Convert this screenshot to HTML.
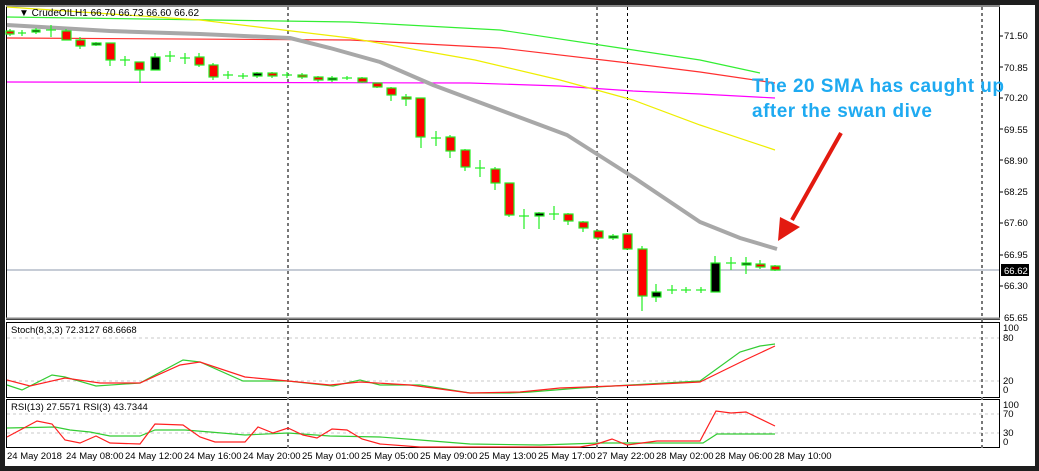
<!DOCTYPE html>
<html><head><meta charset="utf-8"><style>
html,body{margin:0;padding:0;background:#1e1e1e;width:1039px;height:471px;overflow:hidden}
svg{display:block;font-family:"Liberation Sans",sans-serif}
</style></head><body>
<svg width="1039" height="471" viewBox="0 0 1039 471" xmlns="http://www.w3.org/2000/svg">
<rect x="0" y="0" width="1039" height="471" fill="#1e1e1e"/>
<rect x="5" y="5" width="1030" height="461" fill="#fff"/>
<!-- panel borders -->
<g fill="none" stroke="#000" stroke-width="1">
<rect x="6.5" y="6.5" width="993" height="313"/>
<rect x="6.5" y="322.5" width="993" height="75"/>
<rect x="6.5" y="399.5" width="993" height="48"/>
</g>
<line x1="6" y1="318.5" x2="1000" y2="318.5" stroke="#888" stroke-width="2"/>
<line x1="6" y1="6" x2="1000" y2="6" stroke="#888" stroke-width="2"/>
<!-- indicator levels -->
<g stroke="#c8c8c8" stroke-dasharray="3,3">
<line x1="7" y1="338" x2="999" y2="338"/><line x1="7" y1="381" x2="999" y2="381"/>
<line x1="7" y1="414" x2="999" y2="414"/><line x1="7" y1="433" x2="999" y2="433"/>
</g>
<!-- vertical separators -->
<g stroke="#777" stroke-width="2" stroke-dasharray="3,3">
<line x1="288" y1="7" x2="288" y2="448"/><line x1="597" y1="7" x2="597" y2="448"/><line x1="982" y1="7" x2="982" y2="448"/>
</g>
<line x1="627.5" y1="7" x2="627.5" y2="448" stroke="#000" stroke-dasharray="3,3"/>
<!-- price line -->
<line x1="7" y1="270" x2="999" y2="270" stroke="#b4bcc8" stroke-width="1.5"/>
<!-- MAs -->
<polyline fill="none" stroke="#33ee33" stroke-width="1.2" points="7,17 350,22 500,30 620,48 700,60 760,73"/>
<polyline fill="none" stroke="#ff3030" stroke-width="1.2" points="7,38 350,40 500,48 620,62 700,72 775,83"/>
<polyline fill="none" stroke="#ff00ff" stroke-width="1.2" points="7,82 470,83 560,86 633,91 700,94 775,98"/>
<polyline fill="none" stroke="#eeee00" stroke-width="1.2" points="7,7 200,20 350,38 475,60 560,80 633,100 700,125 775,150"/>
<polyline fill="none" stroke="#a8a8a8" stroke-width="4" points="7,25 110,31 200,34 290,38 330,48 380,62 433,85 500,110 567,135 633,177 700,222 740,238 777,249"/>
<!-- candles -->
<g stroke="#22ee22" stroke-width="1.2">
<line x1="10" y1="29" x2="10" y2="36"/><rect x="6" y="31" width="8" height="3" fill="#f00"/>
<line x1="22" y1="30" x2="22" y2="36"/><line x1="18" y1="33" x2="26" y2="33"/>
<line x1="36" y1="28" x2="36" y2="34"/><rect x="32" y="30" width="8" height="2" fill="#000"/>
<line x1="51" y1="25" x2="51" y2="37"/><line x1="46" y1="30" x2="56" y2="30"/>
<line x1="66" y1="29" x2="66" y2="40"/><rect x="62" y="31" width="9" height="9" fill="#f00"/>
<line x1="80" y1="37" x2="80" y2="49"/><rect x="76" y="40" width="9" height="6" fill="#f00"/>
<line x1="96" y1="42" x2="96" y2="46"/><rect x="92" y="43" width="9" height="2" fill="#000"/>
<line x1="110" y1="43" x2="110" y2="66"/><rect x="106" y="43" width="9" height="17" fill="#f00"/>
<line x1="125" y1="56" x2="125" y2="66"/><line x1="120" y1="60" x2="130" y2="60"/>
<line x1="140" y1="62" x2="140" y2="83"/><rect x="135" y="62" width="9" height="8" fill="#f00"/>
<line x1="155" y1="53" x2="155" y2="70"/><rect x="151" y="57" width="9" height="13" fill="#000"/>
<line x1="170" y1="51" x2="170" y2="62"/><line x1="165" y1="56" x2="175" y2="56"/>
<line x1="185" y1="53" x2="185" y2="64"/><line x1="180" y1="58" x2="190" y2="58"/>
<line x1="199" y1="53" x2="199" y2="67"/><rect x="195" y="57" width="9" height="8" fill="#f00"/>
<line x1="213" y1="63" x2="213" y2="80"/><rect x="209" y="65" width="9" height="12" fill="#f00"/>
<line x1="228" y1="71" x2="228" y2="79"/><line x1="223" y1="75" x2="233" y2="75"/>
<line x1="243" y1="73" x2="243" y2="79"/><line x1="238" y1="76" x2="248" y2="76"/>
<line x1="257" y1="72" x2="257" y2="78"/><rect x="253" y="73" width="9" height="3" fill="#000"/>
<line x1="272" y1="72" x2="272" y2="78"/><rect x="268" y="73" width="9" height="3" fill="#f00"/>
<line x1="287" y1="72" x2="287" y2="78"/><line x1="282" y1="75" x2="292" y2="75"/>
<line x1="302" y1="73" x2="302" y2="79"/><rect x="298" y="75" width="9" height="2" fill="#f00"/>
<line x1="318" y1="76" x2="318" y2="82"/><rect x="314" y="77" width="9" height="3" fill="#f00"/>
<line x1="332" y1="76" x2="332" y2="82"/><rect x="328" y="78" width="9" height="2" fill="#000"/>
<line x1="347" y1="76" x2="347" y2="80"/><line x1="342" y1="78" x2="352" y2="78"/>
<line x1="362" y1="77" x2="362" y2="83"/><rect x="358" y="78" width="9" height="4" fill="#f00"/>
<line x1="377" y1="83" x2="377" y2="88"/><rect x="373" y="83" width="9" height="4" fill="#f00"/>
<line x1="391" y1="87" x2="391" y2="101"/><rect x="387" y="88" width="9" height="7" fill="#f00"/>
<line x1="406" y1="94" x2="406" y2="106"/><rect x="402" y="97" width="9" height="2" fill="#f00"/>
<line x1="421" y1="98" x2="421" y2="148"/><rect x="416" y="98" width="9" height="39" fill="#f00"/>
<line x1="436" y1="131" x2="436" y2="146"/><line x1="431" y1="138" x2="441" y2="138"/>
<line x1="450" y1="135" x2="450" y2="158"/><rect x="446" y="137" width="9" height="14" fill="#f00"/>
<line x1="465" y1="149" x2="465" y2="171"/><rect x="461" y="150" width="9" height="17" fill="#f00"/>
<line x1="480" y1="160" x2="480" y2="177"/><line x1="475" y1="168" x2="485" y2="168"/>
<line x1="495" y1="167" x2="495" y2="190"/><rect x="491" y="169" width="9" height="14" fill="#f00"/>
<line x1="509" y1="183" x2="509" y2="217"/><rect x="505" y="183" width="9" height="32" fill="#f00"/>
<line x1="524" y1="209" x2="524" y2="229"/><line x1="519" y1="216" x2="529" y2="216"/>
<line x1="539" y1="212" x2="539" y2="229"/><rect x="535" y="213" width="9" height="3" fill="#000"/>
<line x1="554" y1="206" x2="554" y2="220"/><line x1="549" y1="214" x2="559" y2="214"/>
<line x1="568" y1="213" x2="568" y2="225"/><rect x="564" y="214" width="9" height="7" fill="#f00"/>
<line x1="583" y1="221" x2="583" y2="232"/><rect x="579" y="222" width="9" height="6" fill="#f00"/>
<line x1="598" y1="230" x2="598" y2="240"/><rect x="594" y="231" width="9" height="7" fill="#f00"/>
<line x1="613" y1="234" x2="613" y2="240"/><rect x="609" y="236" width="9" height="2" fill="#000"/>
<line x1="627" y1="233" x2="627" y2="250"/><rect x="623" y="234" width="9" height="15" fill="#f00"/>
<line x1="642" y1="246" x2="642" y2="311"/><rect x="638" y="249" width="9" height="47" fill="#f00"/>
<line x1="656" y1="284" x2="656" y2="302"/><rect x="652" y="292" width="9" height="5" fill="#000"/>
<line x1="672" y1="285" x2="672" y2="294"/><line x1="667" y1="290" x2="677" y2="290"/>
<line x1="686" y1="287" x2="686" y2="293"/><line x1="681" y1="290" x2="691" y2="290"/>
<line x1="701" y1="287" x2="701" y2="293"/><line x1="696" y1="290" x2="706" y2="290"/>
<line x1="715" y1="256" x2="715" y2="292"/><rect x="711" y="263" width="9" height="29" fill="#000"/>
<line x1="731" y1="257" x2="731" y2="270"/><line x1="726" y1="263" x2="736" y2="263"/>
<line x1="746" y1="257" x2="746" y2="274"/><rect x="742" y="263" width="9" height="2" fill="#000"/>
<line x1="760" y1="260" x2="760" y2="269"/><rect x="756" y="264" width="9" height="3" fill="#f00"/>
<line x1="775" y1="265" x2="775" y2="271"/><rect x="771" y="266" width="9" height="4" fill="#f00"/>
</g>
<!-- annotation -->
<g fill="#1eaaf1" font-weight="bold" font-size="19">
<text x="752" y="92" textLength="252">The 20 SMA has caught up</text>
<text x="752" y="117" textLength="180">after the swan dive</text>
</g>
<line x1="841" y1="133" x2="792" y2="220" stroke="#e31a10" stroke-width="4"/>
<polygon points="778,241 780,217 800,227" fill="#e31a10"/>
<!-- stoch -->
<polyline fill="none" stroke="#33cc33" stroke-width="1.2" points="7,385 22,390 52,375 65,377 96,386 140,383 183,360 200,362 243,381 288,381 333,386 360,380 380,385 420,385 470,393 510,393 530,392 580,388 630,385 700,381 740,352 760,346 775,344"/>
<polyline fill="none" stroke="#ff2020" stroke-width="1.2" points="7,380 30,386 65,378 100,383 140,383 180,365 200,362 245,377 288,381 330,385 360,382 410,385 470,393 520,392 560,388 640,385 700,382 745,360 775,346"/>
<!-- rsi -->
<polyline fill="none" stroke="#33cc33" stroke-width="1.2" points="7,428 55,427 70,430 90,432 110,436 140,436 155,430 185,430 210,432 245,435 288,433 330,436 380,437 420,440 470,444 540,445 600,443 703,443 717,434 775,434"/>
<polyline fill="none" stroke="#ff2020" stroke-width="1.2" points="7,437 37,421 52,424 65,440 80,443 96,436 110,443 140,444 155,424 183,425 200,437 215,442 245,442 258,427 273,433 288,428 303,435 317,438 332,429 347,430 362,439 380,444 420,447 580,447 597,444 612,439 627,445 642,443 657,441 700,441 716,411 731,413 746,412 775,426"/>
<!-- labels -->
<text x="19" y="16" font-size="10" fill="#000">▼ CrudeOILH1  66.70 66.73 66.60 66.62</text>
<text x="11" y="333" font-size="9.5" fill="#000">Stoch(8,3,3) 72.3127 68.6668</text>
<text x="11" y="410" font-size="9.5" fill="#000">RSI(13) 27.5571  RSI(3) 43.7344</text>
<g font-size="9.5" fill="#000">
<text x="1004" y="39">71.50</text><text x="1004" y="71">70.85</text><text x="1004" y="101">70.20</text><text x="1004" y="133">69.55</text><text x="1004" y="164">68.90</text><text x="1004" y="195">68.25</text><text x="1004" y="226">67.60</text><text x="1004" y="258">66.95</text><text x="1004" y="289">66.30</text><text x="1004" y="321">65.65</text>
<text x="1003" y="331">100</text><text x="1003" y="341">80</text><text x="1003" y="384">20</text><text x="1003" y="393">0</text>
<text x="1003" y="408">100</text><text x="1003" y="417">70</text><text x="1003" y="436">30</text><text x="1003" y="445">0</text>
</g>
<rect x="1001" y="264" width="28" height="12" fill="#000"/>
<text x="1004" y="274" font-size="9.5" fill="#fff">66.62</text>
<g stroke="#000"><line x1="1000" y1="36" x2="1003" y2="36"/><line x1="1000" y1="67" x2="1003" y2="67"/><line x1="1000" y1="98" x2="1003" y2="98"/><line x1="1000" y1="129" x2="1003" y2="129"/><line x1="1000" y1="160" x2="1003" y2="160"/><line x1="1000" y1="192" x2="1003" y2="192"/><line x1="1000" y1="223" x2="1003" y2="223"/><line x1="1000" y1="255" x2="1003" y2="255"/><line x1="1000" y1="286" x2="1003" y2="286"/></g>
<g font-size="9.5" fill="#000">
<text x="7" y="459">24 May 2018</text><text x="66" y="459">24 May 08:00</text><text x="125" y="459">24 May 12:00</text><text x="184" y="459">24 May 16:00</text><text x="243" y="459">24 May 20:00</text><text x="302" y="459">25 May 01:00</text><text x="361" y="459">25 May 05:00</text><text x="420" y="459">25 May 09:00</text><text x="479" y="459">25 May 13:00</text><text x="538" y="459">25 May 17:00</text><text x="597" y="459">27 May 22:00</text><text x="656" y="459">28 May 02:00</text><text x="715" y="459">28 May 06:00</text><text x="774" y="459">28 May 10:00</text>
</g>
</svg>
</body></html>
